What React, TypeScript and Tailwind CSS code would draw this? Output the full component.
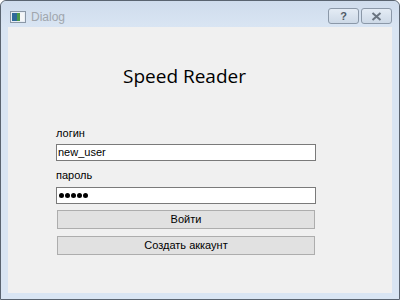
import React from "react";

const ui = { fontFamily: '"Liberation Sans", Arial, sans-serif' };

const App: React.FC = () => {
  return (
    <div className="w-[400px] h-[300px] bg-white">
      <div className="w-[400px] h-[300px] flex flex-col rounded-t-[6px] border border-[#5a6470] bg-[#d9e5f3]">
        {/* title bar */}
        <div className="h-[26px] flex items-start justify-between bg-gradient-to-b from-[#cfdcec] to-[#d9e5f3] rounded-t-[6px]">
          <div className="flex items-center gap-[5px] pl-[9px] pt-[10px]">
            <svg width="16" height="12" viewBox="0 0 16 12">
              <rect x="0.5" y="0.5" width="15" height="11" fill="#e8eef4" stroke="#8a97a6" />
              <rect x="2" y="2" width="5" height="8" fill="#2f6a9a" />
              <rect x="7" y="2" width="3" height="8" fill="#4a9a4a" />
              <rect x="10" y="2" width="4" height="8" fill="#f4f6f8" />
            </svg>
            <span className="text-[12px] leading-none text-[#a0a6ad]" style={ui}>
              Dialog
            </span>
          </div>
          <div className="flex gap-[2px] pt-[7px] pr-[7px]">
            <div className="w-[31px] h-[16px] rounded-[3px] border border-[#8b98a8] bg-gradient-to-b from-[#e4ecf5] to-[#cdd9e7] flex items-center justify-center">
              <span className="text-[11px] font-bold leading-none text-[#505a66]" style={ui}>?</span>
            </div>
            <div className="w-[31px] h-[16px] rounded-[3px] border border-[#8b98a8] bg-gradient-to-b from-[#e4ecf5] to-[#cdd9e7] flex items-center justify-center">
              <svg width="11" height="9" viewBox="0 0 11 9">
                <path d="M1.5 1 L9.5 8 M9.5 1 L1.5 8" stroke="#6a7480" strokeWidth="2" />
              </svg>
            </div>
          </div>
        </div>

        {/* client area */}
        <div className="flex-1 mx-[7px] mb-[6px] bg-[#f0f0f0] flex flex-col pl-[48px]" style={ui}>
          <div
            className="pt-[37px] pl-[67px] text-[19px] leading-[24px] text-black"
            style={{ fontFamily: '"Open Sans", "Noto Sans", sans-serif' }}
          >
            Speed Reader
          </div>
          <div className="mt-[39px] text-[11px] leading-[13px] text-black">логин</div>
          <div className="mt-[4px] w-[260px] h-[17px] border border-[#7a7a7a] bg-white flex items-center pl-[1px] text-[11px] leading-none text-black">
            new_user
          </div>
          <div className="mt-[8px] text-[11px] leading-[13px] text-black">пароль</div>
          <div className="mt-[5px] w-[260px] h-[17px] border border-[#7a7a7a] bg-white flex items-center pl-[2px] gap-[1px]">
            {[0, 1, 2, 3, 4].map(i => (
              <span key={i} className="w-[5px] h-[5px] rounded-full bg-black" />
            ))}
          </div>
          <button className="mt-[6px] ml-[1px] w-[258px] h-[19px] border border-[#adadad] bg-[#e1e1e1] text-[11px] leading-none text-black">
            Войти
          </button>
          <button className="mt-[7px] ml-[1px] w-[258px] h-[19px] border border-[#adadad] bg-[#e1e1e1] text-[11px] leading-none text-black">
            Создать аккаунт
          </button>
        </div>
      </div>
    </div>
  );
};

export default App;
